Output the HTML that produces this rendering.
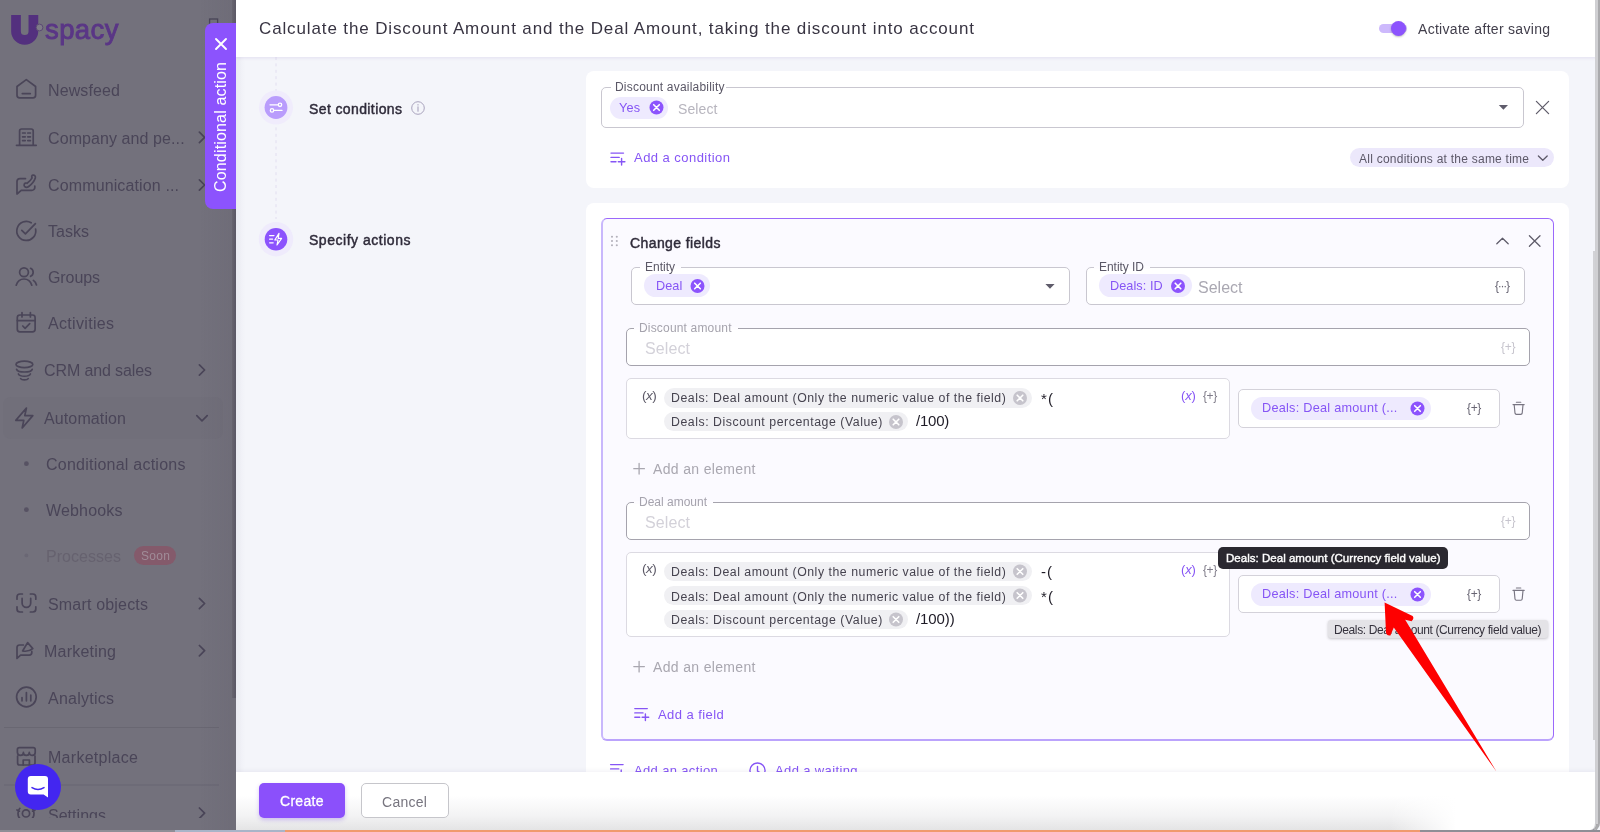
<!DOCTYPE html>
<html lang="en"><head><meta charset="utf-8"><title>Conditional action</title>
<style>
*{box-sizing:border-box;margin:0;padding:0}
html,body{width:1600px;height:832px;overflow:hidden;background:#f4f5fa;font-family:"Liberation Sans",sans-serif}
.abs{position:absolute}
.t{position:absolute;white-space:nowrap;display:block;will-change:transform}
#side{z-index:5;position:absolute;left:0;top:0;width:236px;height:832px;background:#73717c;overflow:hidden}
#side .t{color:#4a4558}
#side svg{position:absolute;overflow:visible}
.si{fill:none;stroke:#4a4558;stroke-width:1.7;stroke-linecap:round;stroke-linejoin:round}
#main{position:absolute;left:0;top:0;width:1596px;height:830px;overflow:hidden}
#main .t{color:#2f2b3a}
.card{position:absolute;background:#fff;border-radius:8px}
.fld{position:absolute;border:1px solid #c9c7d0;border-radius:5px;background:#fff}
.lbl{position:absolute;background:#fff;height:3px}
.chipP{position:absolute;background:#eeeafe;border-radius:12px}
.chipG{position:absolute;background:#f0f0f3;border-radius:10px}
svg{position:absolute;overflow:visible}
</style></head><body>

<!-- ================= SIDEBAR ================= -->
<div id="side">
<!-- logo -->
<svg width="236" height="832" viewBox="0 0 236 832" style="left:0;top:0">
  <path d="M16 15 V31.2 a8.7 8.7 0 0 0 17.4 0 V15" fill="none" stroke="#53307e" stroke-width="9.7"/>
  <circle cx="39.5" cy="27.5" r="3.4" fill="#7f7c88" stroke="#5b4a74" stroke-width="1"/>
  <rect x="209.6" y="19" width="8" height="6" fill="none" stroke="#4a4558" stroke-width="1.3"/>
  <!-- automation highlight -->
  <rect x="3" y="397" width="220" height="42" rx="8" fill="#716f7a"/>
  <g class="si">
    <!-- newsfeed -->
    <path d="M17 86.5 L26.3 79.6 L35.6 86.5 V95.2 a2.6 2.6 0 0 1 -2.6 2.6 H19.6 a2.6 2.6 0 0 1 -2.6 -2.6 Z"/>
    <path d="M22.3 93.6 H30.3"/>
    <!-- company -->
    <path d="M19.6 145 V131 a2 2 0 0 1 2 -2 H31.2 a2 2 0 0 1 2 2 V145"/>
    <path d="M16.5 145.3 H36.2"/>
    <path d="M22.6 133 H25.2 M27.8 133 H30.4 M22.6 136.8 H25.2 M27.8 136.8 H30.4 M22.6 140.6 H25.2 M27.8 140.6 H30.4"/>
    <!-- communication -->
    <path d="M25.5 178.6 H20 a3 3 0 0 0 -3 3 V194 l4.2 -3.6 H31.8 a3 3 0 0 0 3 -3 V186"/>
    <path d="M24.5 186.3 c1.2 1.3 3 1.2 4.2 0.2 c3 -2.4 5.6 -5.4 6.6 -8.6 c0.5 -1.6 -0.8 -3.2 -2.4 -2.8 c-1.2 0.3 -1.6 1.8 -0.8 2.8 c-1.2 2.2 -2.8 4 -5 5.4 c-1 -0.6 -2.4 -0.2 -2.8 0.8 c-0.3 0.8 -0.3 1.6 0.2 2.2 Z"/>
    <!-- tasks -->
    <path d="M35.6 229 a9.5 9.5 0 1 1 -4.4 -6.2"/>
    <path d="M21.8 230.3 l3.6 3.6 L35.4 223.6"/>
    <!-- groups -->
    <circle cx="24" cy="272.3" r="4.4"/>
    <path d="M16.2 285.2 c1.4 -4.6 4.4 -6.2 7.8 -6.2 s6.4 1.6 7.8 6.2"/>
    <path d="M30.6 268.3 a4.4 4.4 0 0 1 0 8"/>
    <path d="M33.4 280.4 c1.5 1 2.6 2.6 3.1 4.6"/>
    <!-- activities -->
    <rect x="17.3" y="315" width="17.8" height="16.8" rx="2.6"/>
    <path d="M17.3 320.6 H35.1 M22 312.6 V317 M30.4 312.6 V317"/>
    <path d="M22.8 326 l2.3 2.3 l4.6 -4.6"/>
    <!-- crm -->
    <ellipse cx="24.4" cy="364.4" rx="8.4" ry="3.2"/>
    <path d="M16.6 369.3 c1.5 3.6 14.1 3.6 15.6 0"/>
    <path d="M18.4 374 c1.4 3 10.6 3 12 0"/>
    <path d="M20.6 378.6 c1.2 1.8 6.4 1.8 7.6 0"/>
    <!-- automation -->
    <path d="M26.4 408 L15.8 420.4 H23.8 L22.2 428 L32.8 415.6 H24.8 Z"/>
    <!-- smart objects -->
    <path d="M17 599.2 V597 a3 3 0 0 1 3 -3 H22.4 M30.4 594 H32.8 a3 3 0 0 1 3 3 V599.2 M17 606.8 V609 a3 3 0 0 0 3 3 H22.4 M30.4 612 H32.8 a3 3 0 0 0 3 -3 V606.8"/>
    <path d="M22.1 598.4 V603 a4.3 4.3 0 0 0 8.6 0 V598.4"/>
    <!-- marketing -->
    <path d="M23.4 645 H19.6 a2.6 2.6 0 0 0 -2.6 2.6 V658.4 l3.6 -3.2 H29.2 a2.6 2.6 0 0 0 2.6 -2.6 V651.4"/>
    <path d="M22.6 651 L27.6 642.6 L32.8 648.6 c-3 2.6 -6.6 3 -10.2 2.4 Z"/>
    <!-- analytics -->
    <circle cx="26.4" cy="697" r="9.8"/>
    <path d="M22 700.8 V697.6 M26.4 700.8 V692.6 M30.8 700.8 V695.2"/>
    <!-- marketplace -->
    <path d="M17.6 756 V763 a2 2 0 0 0 2 2 H33 a2 2 0 0 0 2 -2 V756"/>
    <path d="M17.4 752.4 V749.6 a2 2 0 0 1 2 -2 H33.2 a2 2 0 0 1 2 2 V752.4 c0 4 -5.9 4 -5.9 0 c0 4 -5.9 4 -5.9 0 c0 4 -5.9 4 -5.9 0 Z"/>
    <path d="M23.2 765 V760 H29.4 V765"/>
    <!-- chevrons -->
    <path d="M199.4 132.2 l5.2 5.2 l-5.2 5.2 M199.4 179.8 l5.2 5.2 l-5.2 5.2 M199.4 364.8 l5.2 5.2 l-5.2 5.2 M199.4 598.3 l5.2 5.2 l-5.2 5.2 M199.4 645.5 l5.2 5.2 l-5.2 5.2"/>
    <path d="M196.8 415.6 l5.2 5.2 l5.2 -5.2"/>
  </g>
  <circle cx="26.4" cy="463.7" r="2.4" fill="#575263"/>
  <circle cx="26.4" cy="509.7" r="2.4" fill="#575263"/>
  <circle cx="26.4" cy="555.4" r="1.9" fill="#6a6774"/>
  <path d="M4 727.5 H219 M4 785 H219" stroke="#696772" stroke-width="1"/>
</svg>
<span class="t" style="letter-spacing:0.414px;left:45.2px;top:12.52px;font-size:27.5px;line-height:33.00px;color:#5a3686;-webkit-text-stroke:0.9px #5a3686">spacy</span>
<span class="t" style="letter-spacing:0.121px;left:48px;top:81.18px;font-size:16px;line-height:19.20px;">Newsfeed</span>
<span class="t" style="letter-spacing:0.087px;left:48px;top:129.18px;font-size:16px;line-height:19.20px;">Company and pe...</span>
<span class="t" style="letter-spacing:0.129px;left:48px;top:175.88px;font-size:16px;line-height:19.20px;">Communication ...</span>
<span class="t" style="letter-spacing:0.023px;left:48px;top:221.68px;font-size:16px;line-height:19.20px;">Tasks</span>
<span class="t" style="letter-spacing:-0.094px;left:47.6px;top:268.28px;font-size:16px;line-height:19.20px;">Groups</span>
<span class="t" style="letter-spacing:0.319px;left:47.6px;top:314.48px;font-size:16px;line-height:19.20px;">Activities</span>
<span class="t" style="letter-spacing:-0.115px;left:44px;top:360.88px;font-size:16px;line-height:19.20px;">CRM and sales</span>
<span class="t" style="letter-spacing:0.118px;left:44px;top:408.78px;font-size:16px;line-height:19.20px;">Automation</span>
<span class="t" style="letter-spacing:0.233px;left:45.7px;top:454.68px;font-size:16px;line-height:19.20px;">Conditional actions</span>
<span class="t" style="letter-spacing:0.155px;left:45.7px;top:500.58px;font-size:16px;line-height:19.20px;">Webhooks</span>
<span class="t" style="letter-spacing:0.037px;left:45.7px;top:547.28px;font-size:16px;line-height:19.20px;color:#66626f">Processes</span>
<div class="abs" style="left:134px;top:546px;width:42px;height:19px;border-radius:10px;background:#845a6b"></div>
<span class="t" style="letter-spacing:0.323px;left:141px;top:548.74px;font-size:12px;line-height:14.40px;color:#a08c98">Soon</span>
<span class="t" style="letter-spacing:0.182px;left:47.6px;top:595.38px;font-size:16px;line-height:19.20px;">Smart objects</span>
<span class="t" style="letter-spacing:0.219px;left:44px;top:641.68px;font-size:16px;line-height:19.20px;">Marketing</span>
<span class="t" style="letter-spacing:0.246px;left:47.6px;top:689.28px;font-size:16px;line-height:19.20px;">Analytics</span>
<span class="t" style="letter-spacing:0.284px;left:47.6px;top:748.18px;font-size:16px;line-height:19.20px;">Marketplace</span>
<div class="abs" style="left:0;top:800px;width:236px;height:17.5px;overflow:hidden">
  <span class="t" style="letter-spacing:0.027px;left:47.6px;top:5.88px;font-size:16px;line-height:19.20px;">Settings</span>
  <svg width="236" height="20" viewBox="0 800 236 20" style="left:0;top:0"><g class="si">
    <circle cx="26" cy="813.4" r="3.6"/>
    <path d="M19.8 808.4 c-2.4 2 -2.4 8 0 10 M32.2 808.4 c2.4 2 2.4 8 0 10 M17 810 l2.4 1.2 M35 810 l-2.4 1.2"/>
    <path d="M199.4 808 l5.2 5.2 l-5.2 5.2"/>
  </g></svg>
</div>
<!-- right shade band -->
<div class="abs" style="left:200px;top:0;width:32px;height:832px;background:linear-gradient(90deg,rgba(60,55,75,0) 0,rgba(60,55,75,0.07) 100%)"></div>
<div class="abs" style="left:232px;top:0;width:4px;height:832px;background:#6f6d78"></div>
<div class="abs" style="left:232px;top:0;width:4px;height:698px;background:linear-gradient(90deg,#68656f,#5f5c69 60%,#5c5966)"></div>
<!-- chat -->
<svg width="60" height="60" viewBox="8 757 60 60" style="left:8px;top:757px">
  <circle cx="38" cy="787" r="23" fill="#4326f0"/>
  <path d="M30.8 776 H45 a3 3 0 0 1 3 3 V797.6 L43.6 794.4 H30.8 a3 3 0 0 1 -3 -3 V779 a3 3 0 0 1 3 -3 Z" fill="#fff"/>
  <path d="M32 787.6 q6 3.6 12 0" fill="none" stroke="#4326f0" stroke-width="1.5" stroke-linecap="round"/>
</svg>

</div>

<!-- ================= MAIN ================= -->
<div id="main">
<!-- timeline -->
<svg width="1600" height="832" viewBox="0 0 1600 832" style="left:0;top:0">
  <path d="M276 57 V219" stroke="#e2def0" stroke-width="1" stroke-dasharray="3 3.4" fill="none"/>
  <circle cx="276" cy="107.5" r="17" fill="#f0ecfc"/>
  <circle cx="276" cy="107.5" r="11.4" fill="#b99cfc"/>
  <g fill="none" stroke="#fff" stroke-width="1.3" stroke-linecap="round">
    <path d="M270 104.8 H278.2"/><circle cx="280" cy="104.8" r="1.7"/>
    <path d="M273.8 110.4 H282"/><circle cx="272" cy="110.4" r="1.7"/>
  </g>
  <circle cx="276" cy="239.2" r="17.2" fill="#efebfc"/>
  <circle cx="276" cy="239.2" r="11.3" fill="#8c53fd"/>
  <g fill="none" stroke="#fff" stroke-width="1.2" stroke-linecap="round" stroke-linejoin="round">
    <path d="M269.6 235.6 H274 M269.6 239.2 H272.6 M269.6 242.8 H273.2"/>
    <path d="M279 233.4 L274.8 240 H278 L277 245 L281.6 238.4 H278.2 Z"/>
  </g>
  <circle cx="418" cy="108" r="6.3" fill="none" stroke="#a9a3bd" stroke-width="1"/>
  <path d="M418 106.8 V111.2 M418 104.6 V104.9" stroke="#a9a3bd" stroke-width="1.1" stroke-linecap="round"/>
</svg>
<span class="t" style="letter-spacing:0.388px;left:309px;top:101.06px;font-size:14px;line-height:16.80px;-webkit-text-stroke:0.45px #2f2b3a">Set conditions</span>
<span class="t" style="letter-spacing:0.523px;left:308.5px;top:231.56px;font-size:14px;line-height:16.80px;-webkit-text-stroke:0.45px #2f2b3a">Specify actions</span>

<!-- card 1 -->
<div class="card" style="left:586px;top:71px;width:983px;height:116.5px"></div>
<div class="fld" style="left:601px;top:87px;width:923px;height:41px"></div>
<div class="lbl" style="left:611px;top:86px;width:114.5px"></div>
<span class="t" style="letter-spacing:0.205px;left:615px;top:80.24px;font-size:12px;line-height:14.40px;color:#5a5766">Discount availability</span>
<div class="chipP" style="left:610px;top:96.7px;width:58px;height:22px"></div>
<span class="t" style="letter-spacing:0.248px;left:619.1px;top:101.33px;font-size:12.7px;line-height:15.24px;color:#8655f5">Yes</span>
<span class="t" style="letter-spacing:0.116px;left:678px;top:100.76px;font-size:14px;line-height:16.80px;color:#b7b5be">Select</span>
<span class="t" style="letter-spacing:0.455px;left:633.75px;top:149.65px;font-size:13px;line-height:15.60px;color:#8655f5">Add a condition</span>
<div class="abs" style="left:1349.5px;top:148.4px;width:204.7px;height:19px;border-radius:9.5px;background:#ece8fb"></div>
<span class="t" style="letter-spacing:0.242px;left:1359px;top:152.24px;font-size:12px;line-height:14.40px;color:#5c5868">All conditions at the same time</span>

<!-- card 2 -->
<div class="card" style="left:586px;top:203px;width:983px;height:620px"></div>
<div class="abs" style="left:601px;top:218px;width:953px;height:523px;border-style:solid;border-color:#9b68fb #9b68fb #bba3fc #c9b8fc;border-width:1px 1px 2px 2px;border-radius:6px;background:#fbfaff"></div>
<span class="t" style="letter-spacing:0.406px;left:629.5px;top:234.66px;font-size:14px;line-height:16.80px;-webkit-text-stroke:0.45px #2f2b3a">Change fields</span>

<div class="fld" style="left:631px;top:267px;width:439px;height:38px"></div>
<div class="lbl" style="left:640px;top:266px;width:40.5px;background:#fdfcff"></div>
<span class="t" style="letter-spacing:-0.003px;left:645px;top:259.84px;font-size:12px;line-height:14.40px;color:#5a5766">Entity</span>
<div class="chipP" style="left:644.2px;top:274.4px;width:66.3px;height:23px"></div>
<span class="t" style="letter-spacing:0.035px;left:656.3px;top:279.13px;font-size:12.7px;line-height:15.24px;color:#8655f5">Deal</span>

<div class="fld" style="left:1086px;top:267px;width:438.5px;height:38px"></div>
<div class="lbl" style="left:1094px;top:266px;width:56px;background:#fdfcff"></div>
<span class="t" style="letter-spacing:-0.045px;left:1099.25px;top:259.84px;font-size:12px;line-height:14.40px;color:#5a5766">Entity ID</span>
<div class="chipP" style="left:1098.7px;top:274.4px;width:93px;height:23px"></div>
<span class="t" style="letter-spacing:0.064px;left:1110.3px;top:279.13px;font-size:12.7px;line-height:15.24px;color:#8655f5">Deals: ID</span>
<span class="t" style="letter-spacing:0.006px;left:1198px;top:278.18px;font-size:16px;line-height:19.20px;color:#aaa8b2">Select</span>
<span class="t" style="letter-spacing:-1.254px;left:1495px;top:278.84px;font-size:12px;line-height:14.40px;color:#686573">{···}</span>

<div class="fld" style="left:626px;top:328px;width:904px;height:38px;border-color:#a5a3ad"></div>
<div class="lbl" style="left:634px;top:327px;width:103.5px;background:#fdfcff"></div>
<span class="t" style="letter-spacing:0.175px;left:639.25px;top:320.74px;font-size:12px;line-height:14.40px;color:#a5a3ad">Discount amount</span>
<span class="t" style="letter-spacing:0.106px;left:645px;top:339.38px;font-size:16px;line-height:19.20px;color:#d3d1d9">Select</span>
<span class="t" style="letter-spacing:-0.316px;left:1501px;top:339.84px;font-size:12px;line-height:14.40px;color:#c6c4cd">{+}</span>

<div class="fld" style="left:626px;top:378px;width:604px;height:60.6px;border-color:#dcdae2"></div>
<span class="t" style="letter-spacing:-0.475px;left:642.3px;top:387.76px;font-size:13.5px;line-height:16.20px;color:#5c5967">(<i>x</i>)</span>
<div class="chipG" style="left:663.7px;top:388px;width:368.3px;height:19.5px"></div>
<span class="t" style="letter-spacing:0.532px;left:671.3px;top:390.56px;font-size:12.3px;line-height:14.76px;color:#46434f">Deals: Deal amount (Only the numeric value of the field)</span>
<span class="t" style="letter-spacing:1.156px;left:1040.5px;top:389.97px;font-size:15px;line-height:18.00px;color:#1e1b26">*(</span>
<div class="chipG" style="left:663.7px;top:412px;width:244.3px;height:19.2px"></div>
<span class="t" style="letter-spacing:0.548px;left:671.3px;top:414.56px;font-size:12.3px;line-height:14.76px;color:#46434f">Deals: Discount percentage (Value)</span>
<span class="t" style="letter-spacing:-0.238px;left:916.25px;top:412.27px;font-size:15px;line-height:18.00px;color:#1e1b26">/100)</span>
<span class="t" style="letter-spacing:-0.219px;left:1180.75px;top:388.25px;font-size:13px;line-height:15.60px;color:#8655f5">(<i>x</i>)</span>
<span class="t" style="letter-spacing:-0.391px;left:1202.5px;top:388.64px;font-size:12px;line-height:14.40px;color:#807d8a">{+}</span>

<div class="fld" style="left:1238px;top:389px;width:262px;height:38.5px;border-color:#d4d2da"></div>
<div class="chipP" style="left:1250.7px;top:397px;width:180.8px;height:22.6px"></div>
<span class="t" style="letter-spacing:0.252px;left:1262px;top:401.23px;font-size:12.7px;line-height:15.24px;color:#8655f5">Deals: Deal amount (...</span>
<span class="t" style="letter-spacing:-0.366px;left:1466.8px;top:401.44px;font-size:12px;line-height:14.40px;color:#686573">{+}</span>

<span class="t" style="letter-spacing:0.340px;left:653px;top:460.56px;font-size:14px;line-height:16.80px;color:#a9a7b0">Add an element</span>

<div class="fld" style="left:626px;top:502px;width:904px;height:37.7px;border-color:#a5a3ad"></div>
<div class="lbl" style="left:634px;top:501px;width:79px;background:#fdfcff"></div>
<span class="t" style="letter-spacing:-0.005px;left:639.25px;top:494.54px;font-size:12px;line-height:14.40px;color:#a5a3ad">Deal amount</span>
<span class="t" style="letter-spacing:0.106px;left:645px;top:513.18px;font-size:16px;line-height:19.20px;color:#d3d1d9">Select</span>
<span class="t" style="letter-spacing:-0.316px;left:1501px;top:513.84px;font-size:12px;line-height:14.40px;color:#c6c4cd">{+}</span>

<div class="fld" style="left:626px;top:551.6px;width:604px;height:85px;border-color:#dcdae2"></div>
<span class="t" style="letter-spacing:-0.475px;left:642.3px;top:560.66px;font-size:13.5px;line-height:16.20px;color:#5c5967">(<i>x</i>)</span>
<div class="chipG" style="left:663.7px;top:561.8px;width:368.3px;height:19.4px"></div>
<span class="t" style="letter-spacing:0.532px;left:671.3px;top:564.56px;font-size:12.3px;line-height:14.76px;color:#46434f">Deals: Deal amount (Only the numeric value of the field)</span>
<span class="t" style="letter-spacing:1.000px;left:1040.5px;top:562.77px;font-size:15px;line-height:18.00px;color:#1e1b26">-(</span>
<div class="chipG" style="left:663.7px;top:586px;width:368.3px;height:19px"></div>
<span class="t" style="letter-spacing:0.532px;left:671.3px;top:590.06px;font-size:12.3px;line-height:14.76px;color:#46434f">Deals: Deal amount (Only the numeric value of the field)</span>
<span class="t" style="letter-spacing:1.156px;left:1040.5px;top:588.47px;font-size:15px;line-height:18.00px;color:#1e1b26">*(</span>
<div class="chipG" style="left:663.7px;top:609.8px;width:244.3px;height:19.2px"></div>
<span class="t" style="letter-spacing:0.548px;left:671.3px;top:612.86px;font-size:12.3px;line-height:14.76px;color:#46434f">Deals: Discount percentage (Value)</span>
<span class="t" style="letter-spacing:-0.087px;left:916.25px;top:610.27px;font-size:15px;line-height:18.00px;color:#1e1b26">/100))</span>
<span class="t" style="letter-spacing:-0.219px;left:1180.75px;top:562.25px;font-size:13px;line-height:15.60px;color:#8655f5">(<i>x</i>)</span>
<span class="t" style="letter-spacing:-0.391px;left:1202.5px;top:562.64px;font-size:12px;line-height:14.40px;color:#807d8a">{+}</span>

<div class="fld" style="left:1238px;top:574.5px;width:262px;height:38.5px;border-color:#d4d2da"></div>
<div class="chipP" style="left:1250.7px;top:582.6px;width:180.8px;height:23px"></div>
<span class="t" style="letter-spacing:0.252px;left:1262px;top:587.23px;font-size:12.7px;line-height:15.24px;color:#8655f5">Deals: Deal amount (...</span>
<span class="t" style="letter-spacing:-0.366px;left:1466.8px;top:587.44px;font-size:12px;line-height:14.40px;color:#686573">{+}</span>

<span class="t" style="letter-spacing:0.340px;left:653px;top:659.46px;font-size:14px;line-height:16.80px;color:#a9a7b0">Add an element</span>
<span class="t" style="letter-spacing:0.431px;left:657.5px;top:706.85px;font-size:13px;line-height:15.60px;color:#8655f5">Add a field</span>
<span class="t" style="letter-spacing:0.353px;left:633.75px;top:763.05px;font-size:13px;line-height:15.60px;color:#8655f5">Add an action</span>
<span class="t" style="letter-spacing:0.370px;left:775px;top:763.05px;font-size:13px;line-height:15.60px;color:#8655f5">Add a waiting</span>

<!-- tooltips -->
<div class="abs" style="left:1327.5px;top:619.5px;width:220.6px;height:18.6px;border-radius:3px;background:#e4e3e7;box-shadow:0 1px 3px rgba(0,0,0,.22)"></div>
<span class="t" style="letter-spacing:-0.382px;left:1333.75px;top:623.44px;font-size:12px;line-height:14.40px;color:#35323d">Deals: Deal amount (Currency field value)</span>
<div class="abs" style="left:1218px;top:547px;width:230.3px;height:22.3px;border-radius:5px;background:#2a2830"></div>
<span class="t" style="letter-spacing:0.025px;left:1225.5px;top:551.73px;font-size:11.5px;line-height:13.80px;color:#fff;-webkit-text-stroke:0.4px #fff">Deals: Deal amount (Currency field value)</span>

<!-- icons layer -->
<svg width="1600" height="832" viewBox="0 0 1600 832" style="left:0;top:0">
  <g fill="#8c53fd">
    <g transform="translate(656.5 107.5)"><circle r="7"/><path d="M-2.8 -2.8 L2.8 2.8 M2.8 -2.8 L-2.8 2.8" stroke="#fff" stroke-width="1.6" stroke-linecap="round" fill="none"/></g>
    <g transform="translate(697.5 286)"><circle r="7"/><path d="M-2.8 -2.8 L2.8 2.8 M2.8 -2.8 L-2.8 2.8" stroke="#fff" stroke-width="1.6" stroke-linecap="round" fill="none"/></g>
    <g transform="translate(1178 286)"><circle r="7"/><path d="M-2.8 -2.8 L2.8 2.8 M2.8 -2.8 L-2.8 2.8" stroke="#fff" stroke-width="1.6" stroke-linecap="round" fill="none"/></g>
    <g transform="translate(1417.5 408.5)"><circle r="7"/><path d="M-2.8 -2.8 L2.8 2.8 M2.8 -2.8 L-2.8 2.8" stroke="#fff" stroke-width="1.6" stroke-linecap="round" fill="none"/></g>
    <g transform="translate(1417.5 594.5)"><circle r="7"/><path d="M-2.8 -2.8 L2.8 2.8 M2.8 -2.8 L-2.8 2.8" stroke="#fff" stroke-width="1.6" stroke-linecap="round" fill="none"/></g>
  </g>
  <g fill="#c6c4cc">
    <g transform="translate(1020 398)"><circle r="7"/><path d="M-2.8 -2.8 L2.8 2.8 M2.8 -2.8 L-2.8 2.8" stroke="#fff" stroke-width="1.6" stroke-linecap="round" fill="none"/></g>
    <g transform="translate(896 422)"><circle r="7"/><path d="M-2.8 -2.8 L2.8 2.8 M2.8 -2.8 L-2.8 2.8" stroke="#fff" stroke-width="1.6" stroke-linecap="round" fill="none"/></g>
    <g transform="translate(1020 571.5)"><circle r="7"/><path d="M-2.8 -2.8 L2.8 2.8 M2.8 -2.8 L-2.8 2.8" stroke="#fff" stroke-width="1.6" stroke-linecap="round" fill="none"/></g>
    <g transform="translate(1020 595.5)"><circle r="7"/><path d="M-2.8 -2.8 L2.8 2.8 M2.8 -2.8 L-2.8 2.8" stroke="#fff" stroke-width="1.6" stroke-linecap="round" fill="none"/></g>
    <g transform="translate(896 619.5)"><circle r="7"/><path d="M-2.8 -2.8 L2.8 2.8 M2.8 -2.8 L-2.8 2.8" stroke="#fff" stroke-width="1.6" stroke-linecap="round" fill="none"/></g>
  </g>
  <g transform="translate(1518.6 408.2)" fill="none" stroke="#787582" stroke-width="1.15" stroke-linecap="round" stroke-linejoin="round"><path d="M-5.6 -3.6 H5.6 M-2.2 -6 H2.2 M-4.4 -3.4 L-3.6 5 a1.4 1.4 0 0 0 1.4 1.2 H2.2 a1.4 1.4 0 0 0 1.4 -1.2 L4.4 -3.4"/></g>
  <g transform="translate(1518.6 594)" fill="none" stroke="#787582" stroke-width="1.15" stroke-linecap="round" stroke-linejoin="round"><path d="M-5.6 -3.6 H5.6 M-2.2 -6 H2.2 M-4.4 -3.4 L-3.6 5 a1.4 1.4 0 0 0 1.4 1.2 H2.2 a1.4 1.4 0 0 0 1.4 -1.2 L4.4 -3.4"/></g>
  <g transform="translate(611 153.1)" fill="none" stroke="#8655f5" stroke-width="1.4" stroke-linecap="round"><path d="M0 0 H12.5 M0 4.3 H8.2 M0 8.6 H5 M10.6 5.3 V11.9 M7.3 8.6 H13.9"/></g>
  <g transform="translate(634.8 708.6)" fill="none" stroke="#8655f5" stroke-width="1.4" stroke-linecap="round"><path d="M0 0 H12.5 M0 4.3 H8.2 M0 8.6 H5 M10.6 5.3 V11.9 M7.3 8.6 H13.9"/></g>
  <g transform="translate(610.6 764.6)" fill="none" stroke="#8655f5" stroke-width="1.4" stroke-linecap="round"><path d="M0 0 H12.5 M0 4.3 H8.2 M0 8.6 H5 M10.6 5.3 V11.9 M7.3 8.6 H13.9"/></g>
  <circle cx="757.5" cy="770.6" r="7.6" fill="none" stroke="#8655f5" stroke-width="1.4"/>
  <path d="M757.5 766.4 V771 L760.4 772.8" fill="none" stroke="#8655f5" stroke-width="1.4" stroke-linecap="round"/>
  <!-- dropdown arrows -->
  <path d="M1498.8 105 H1508 L1503.4 109.8 Z M1045.4 284 H1054.6 L1050 288.8 Z" fill="#5f5c6b"/>
  <!-- X icons -->
  <path d="M1536.4 101.4 L1548.6 113.6 M1548.6 101.4 L1536.4 113.6" stroke="#5e5b69" stroke-width="1.25" stroke-linecap="round"/>
  <path d="M1529.4 235.7 L1540 246.3 M1540 235.7 L1529.4 246.3" stroke="#5e5b69" stroke-width="1.25" stroke-linecap="round"/>
  <path d="M1496.8 243.8 L1502.5 238.2 L1508.2 243.8" fill="none" stroke="#5e5b69" stroke-width="1.25" stroke-linecap="round" stroke-linejoin="round"/>
  <path d="M1538.4 156 L1542.8 160.2 L1547.2 156" fill="none" stroke="#5c5868" stroke-width="1.3" stroke-linecap="round" stroke-linejoin="round"/>
  <!-- drag handle -->
  <g fill="#b3b1bb"><circle cx="612" cy="236.8" r="1.05"/><circle cx="616.8" cy="236.8" r="1.05"/><circle cx="612" cy="241" r="1.05"/><circle cx="616.8" cy="241" r="1.05"/><circle cx="612" cy="245.2" r="1.05"/><circle cx="616.8" cy="245.2" r="1.05"/></g>
  <!-- plus icons -->
  <path d="M633.8 468.7 H644.4 M639.1 463.4 V474 M633.8 666.6 H644.4 M639.1 661.3 V671.9" stroke="#a9a7b0" stroke-width="1.3" stroke-linecap="round"/>
  <!-- red arrow -->
  <path d="M1384.6 602.6 L1386 632.6 Q1386.6 636 1390.4 635.4 L1393.8 627.6 L1496.6 771.8 L1405.2 619.8 L1411.6 621.2 Q1414.6 618.6 1412.6 616 Z" fill="#fe0000"/>
</svg>

<div class="abs" style="left:236px;top:57px;width:9px;height:715px;background:linear-gradient(90deg,rgba(40,30,80,.045),rgba(40,30,80,0))"></div>
<!-- header -->
<div class="abs" style="left:236px;top:0;width:1360px;height:57px;background:#fff;box-shadow:0 1px 3px rgba(130,110,190,.16)"></div>
<span class="t" style="letter-spacing:0.871px;left:259px;top:19.10px;font-size:17px;line-height:20.40px;color:#383442">Calculate the Discount Amount and the Deal Amount, taking the discount into account</span>
<div class="abs" style="left:1378.5px;top:24px;width:28px;height:9px;border-radius:4.5px;background:#cdb9fc"></div>
<div class="abs" style="left:1391.3px;top:20.6px;width:15.2px;height:15.2px;border-radius:50%;background:#8c53fd;box-shadow:0 1px 2px rgba(0,0,0,.25)"></div>
<span class="t" style="letter-spacing:0.297px;left:1418px;top:21.36px;font-size:14px;line-height:16.80px;color:#423f4c">Activate after saving</span>

<!-- footer -->
<div class="abs" style="left:236px;top:772px;width:1360px;height:58px;background:linear-gradient(#fff 0,#fff 40%,#f3f3f4 75%,#e4e4e5 100%);box-shadow:0 -1px 4px rgba(120,110,160,.10)"></div>
<div class="abs" style="left:1390px;top:790px;width:206px;height:40px;background:linear-gradient(90deg,rgba(255,255,255,0) 0,#fff 32%)"></div>
<div class="abs" style="left:259px;top:783px;width:86px;height:35.4px;border-radius:5px;background:#8b50fb;box-shadow:0 2px 4px rgba(120,70,230,.3)"></div>
<span class="t" style="letter-spacing:0.294px;left:279.7px;top:793.26px;font-size:14px;line-height:16.80px;color:#fff;-webkit-text-stroke:0.3px #fff">Create</span>
<div class="abs" style="left:361px;top:783px;width:87.6px;height:35.4px;border-radius:5px;border:1px solid #c6c6cb;background:#fff"></div>
<span class="t" style="letter-spacing:0.281px;left:381.6px;top:794.26px;font-size:14px;line-height:16.80px;color:#77757f">Cancel</span>

<!-- scrollbar -->
<div class="abs" style="left:1593px;top:251px;width:3px;height:488.5px;background:#d2d2d6"></div>

</div>

<!-- purple tab -->
<div class="abs" style="left:205px;top:22.6px;width:31px;height:186.4px;background:#8c53fd;border-radius:8px 0 0 8px;z-index:6"></div>
<svg width="20" height="20" viewBox="0 0 20 20" style="left:210.6px;top:33.5px;z-index:7"><path d="M5 5 L15 15 M15 5 L5 15" stroke="#fff" stroke-width="1.9" stroke-linecap="round"/></svg>
<span class="t" style="letter-spacing:0.165px;font-size:16px;line-height:19.20px;left:211.4px;top:192px;transform-origin:0 0;transform:rotate(-90deg);color:#fff;z-index:7">Conditional action</span>
<!-- window chrome -->
<div class="abs" style="left:1590px;top:0;width:10px;height:832px;border-right:4px solid #aaaaad;border-bottom:2.5px solid #8f8e96;border-bottom-right-radius:9px;z-index:9;box-shadow:inset -1px 0 0 #cfcfd2"></div>
<div class="abs" style="left:1596px;top:0;width:1.5px;height:824px;background:#d0d0d3;z-index:10"></div>
<div class="abs" style="left:0;top:829.5px;width:1600px;height:2.5px;background:#8f8e96;z-index:9"></div>
<div class="abs" style="left:175px;top:830.3px;width:110px;height:1.7px;background:#a9b4c8;z-index:10"></div>
<div class="abs" style="left:285px;top:830.3px;width:1135px;height:1.7px;background:#f09a6c;z-index:10"></div>

</body></html>
